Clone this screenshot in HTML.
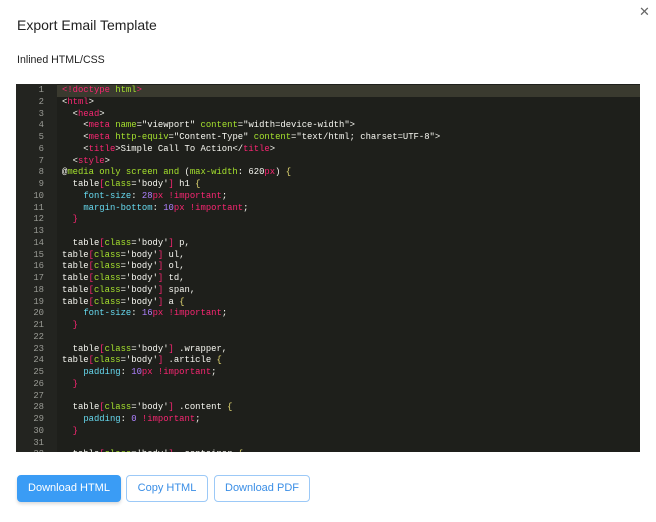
<!DOCTYPE html>
<html><head><style>
body{margin:0;width:656px;height:522px;background:#fff;font-family:"Liberation Sans",sans-serif;position:relative;overflow:hidden}
h1{position:absolute;left:17px;top:17px;margin:0;font-size:14px;font-weight:normal;color:#222}
.close{position:absolute;left:639px;top:4px;font-size:13px;color:#666}
.sub{position:absolute;left:17px;top:54px;font-size:10.6px;color:#222}
.code{position:absolute;left:16px;top:84px;width:624px;height:368px;background:#1e1f1b;overflow:hidden;font-family:"Liberation Mono",monospace;font-size:8.9px;color:#f8f8f2}
.gut{position:absolute;left:0;top:0;width:41px;height:100%;background:#232420}
.ln{position:absolute;left:0;width:41px;text-align:right;color:#9a9b95;box-sizing:border-box;padding-right:13px}
.tx{position:absolute;left:46px;white-space:pre}
.hl{position:absolute;left:41px;right:0;top:1px;height:11.7px;background:#3a3a2f}
.t{color:#f92672}.a{color:#a6e22e}.s{color:#e6db74}.n{color:#ae81ff}.k{color:#66d9ef}.y{color:#e6db74}
.btn{position:absolute;top:475px;height:27px;box-sizing:border-box;border-radius:4px;font-size:11px;line-height:25px;text-align:center}
.p{background:#3a9cf5;color:#fff;border:1px solid #3a9cf5;box-shadow:0 2px 3px rgba(0,0,0,.15)}
.o{border:1px solid #9cc9f7;color:#3a8ee6}
</style></head><body>
<h1>Export Email Template</h1>
<div class="close">✕</div>
<div class="sub">Inlined HTML/CSS</div>
<div class="code">
<div class="gut"></div><div class="hl"></div>
<div id="c"></div>
</div>
<div class="btn p" style="left:17px;width:104px">Download HTML</div>
<div class="btn o" style="left:126px;width:82px">Copy HTML</div>
<div class="btn o" style="left:214px;width:96px">Download PDF</div>
<script>
var L=[
'<span class=t>&lt;!doctype</span> <span class=a>html</span><span class=t>&gt;</span>',
'&lt;<span class=t>html</span>&gt;',
'  &lt;<span class=t>head</span>&gt;',
'    &lt;<span class=t>meta</span> <span class=a>name</span>="viewport" <span class=a>content</span>="width=device-width"&gt;',
'    &lt;<span class=t>meta</span> <span class=a>http-equiv</span>="Content-Type" <span class=a>content</span>="text/html; charset=UTF-8"&gt;',
'    &lt;<span class=t>title</span>&gt;Simple Call To Action&lt;/<span class=t>title</span>&gt;',
'  &lt;<span class=t>style</span>&gt;',
'@<span class=a>media only screen and</span> (<span class=a>max-width</span>: 620<span class=t>px</span>) <span class=y>{</span>',
'  table<span class=t>[</span><span class=a>class</span>=\'body\'<span class=t>]</span> h1 <span class=y>{</span>',
'    <span class=k>font-size</span>: <span class=n>28</span><span class=t>px !important</span>;',
'    <span class=k>margin-bottom</span>: <span class=n>10</span><span class=t>px !important</span>;',
'  <span class=t>}</span>','',
'  table<span class=t>[</span><span class=a>class</span>=\'body\'<span class=t>]</span> p,',
'table<span class=t>[</span><span class=a>class</span>=\'body\'<span class=t>]</span> ul,',
'table<span class=t>[</span><span class=a>class</span>=\'body\'<span class=t>]</span> ol,',
'table<span class=t>[</span><span class=a>class</span>=\'body\'<span class=t>]</span> td,',
'table<span class=t>[</span><span class=a>class</span>=\'body\'<span class=t>]</span> span,',
'table<span class=t>[</span><span class=a>class</span>=\'body\'<span class=t>]</span> a <span class=y>{</span>',
'    <span class=k>font-size</span>: <span class=n>16</span><span class=t>px !important</span>;',
'  <span class=t>}</span>','',
'  table<span class=t>[</span><span class=a>class</span>=\'body\'<span class=t>]</span> .wrapper,',
'table<span class=t>[</span><span class=a>class</span>=\'body\'<span class=t>]</span> .article <span class=y>{</span>',
'    <span class=k>padding</span>: <span class=n>10</span><span class=t>px !important</span>;',
'  <span class=t>}</span>','',
'  table<span class=t>[</span><span class=a>class</span>=\'body\'<span class=t>]</span> .content <span class=y>{</span>',
'    <span class=k>padding</span>: <span class=n>0</span> <span class=t>!important</span>;',
'  <span class=t>}</span>','',
'  table<span class=t>[</span><span class=a>class</span>=\'body\'<span class=t>]</span> .container <span class=y>{</span>'
];
var h='';for(var i=0;i<L.length;i++){var t=1+i*11.75;h+='<div class=ln style="top:'+t+'px">'+(i+1)+'</div><div class=tx style="top:'+t+'px">'+L[i]+'</div>';}
document.getElementById('c').innerHTML=h;
</script>
</body></html>
